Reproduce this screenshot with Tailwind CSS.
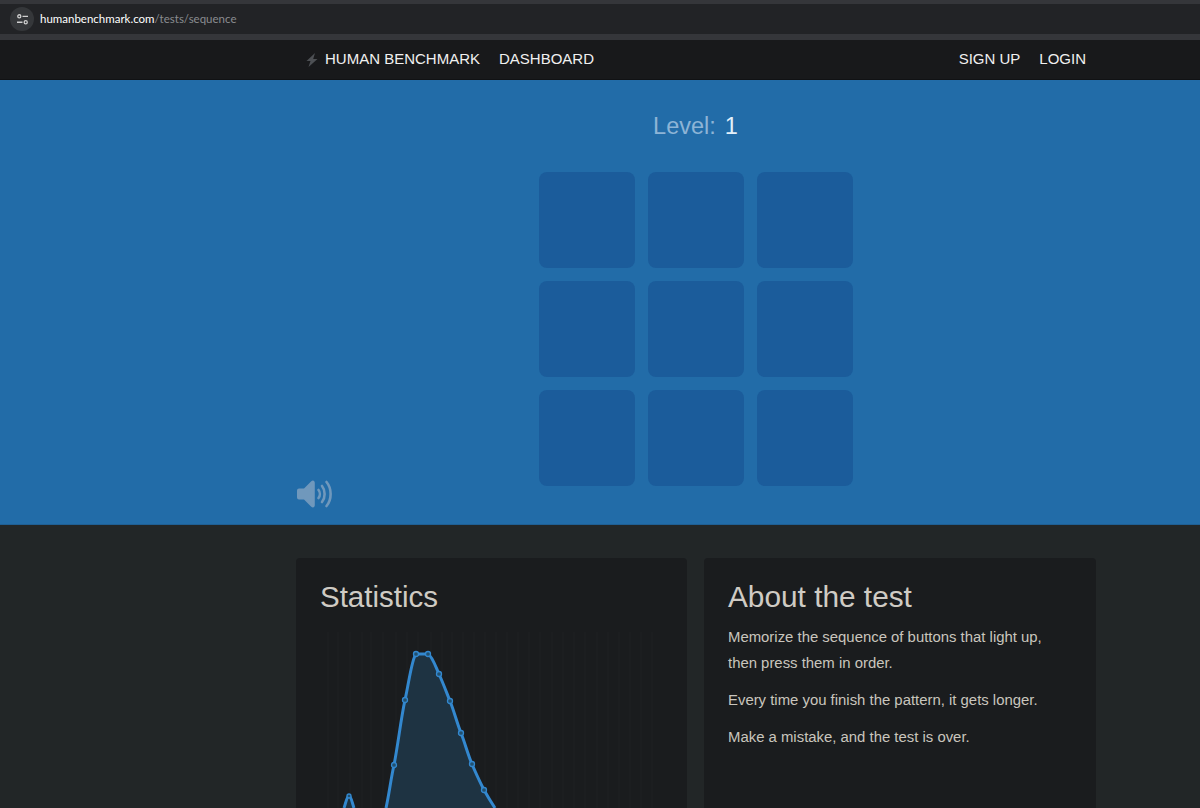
<!DOCTYPE html>
<html lang="en">
<head>
  <meta charset="UTF-8" />
  <title>Sequence Memory Test - Human Benchmark</title>
  <script src="https://cdn.jsdelivr.net/npm/@tailwindcss/browser@4"></script>
</head>
<body class="w-[1200px] h-[808px] overflow-hidden bg-[#222627] font-['Liberation_Sans',Arial,sans-serif]">
<!-- Browser bar -->
<div class="h-10 bg-[#35363a] pt-[4px] pb-[5px]">
  <div class="h-[30px] bg-[#222326] flex items-center pl-[10px]">
    <div class="w-[24px] h-[24px] rounded-full bg-[#35373a] flex items-center justify-center">
      <svg width="13" height="11" viewBox="0 0 14 12" fill="none" stroke="#d0d0d0" stroke-width="1.4">
        <circle cx="3.5" cy="2.5" r="1.7"/><path d="M7 2.5h6M1 9h6"/><circle cx="10.5" cy="9" r="1.7"/>
      </svg>
    </div>
    <span class="ml-[6px] text-[11.5px] font-['Lato',sans-serif] text-white">humanbenchmark.com<span class="text-[#8a8c90]">/tests/sequence</span></span>
  </div>
</div>

<!-- Nav -->
<nav class="h-10 bg-[#18191b] border-b border-[#111214] flex items-center pl-[306px] pr-[114px] text-[15px] text-[#f0f0f0]">
  <svg width="12" height="14" viewBox="0 0 12 14" fill="#4d5054" class="mr-[7px]"><path d="M9 0 .5 8h4L2.500 14 11.500 6H7.200z"/></svg>
  <a href="#" class="mr-[19px]">HUMAN BENCHMARK</a>
  <a href="#">DASHBOARD</a>
  <div class="ml-auto flex gap-[19px]">
    <a href="#">SIGN UP</a>
    <a href="#">LOGIN</a>
  </div>
</nav>

<!-- Test area -->
<section class="relative h-[445px] bg-[#226ca8] border-b border-[#1f5f94]">
  <div class="flex justify-center pl-[191px] pt-[31px] h-[92px] text-[23.5px] leading-[30px]">
    <span class="text-[#8db4d6] mr-[9px]">Level:</span><span class="text-[#e4f0fa]">1</span>
  </div>
  <div class="grid grid-cols-[96px_96px_96px] grid-rows-[96px_96px_96px] gap-[13px] ml-[539px] w-max">
    <div class="rounded-[8px] bg-[#1b5c9b]"></div>
    <div class="rounded-[8px] bg-[#1b5c9b]"></div>
    <div class="rounded-[8px] bg-[#1b5c9b]"></div>
    <div class="rounded-[8px] bg-[#1b5c9b]"></div>
    <div class="rounded-[8px] bg-[#1b5c9b]"></div>
    <div class="rounded-[8px] bg-[#1b5c9b]"></div>
    <div class="rounded-[8px] bg-[#1b5c9b]"></div>
    <div class="rounded-[8px] bg-[#1b5c9b]"></div>
    <div class="rounded-[8px] bg-[#1b5c9b]"></div>
  </div>
  <!-- sound toggle -->
  <svg class="absolute left-[297px] top-[399px]" width="37" height="30" viewBox="0 0 37 30" fill="none">
    <path d="M0 11.500a2 2 0 0 1 2-2h5L14 2.500c1.800-1.800 3.800-1 3.800 1.500v22c0 2.500-2 3.300-3.800 1.500L7 20.500H2a2 2 0 0 1-2-2z" fill="#7098bc"/>
    <g stroke="#7098bc" stroke-width="2.600" stroke-linecap="round">
      <path d="M21.500 11c1.800 2.300 1.800 5.700 0 8"/>
      <path d="M25 7c3.500 4.300 3.500 11.700 0 16"/>
      <path d="M29.500 3c5.500 6.500 5.500 17.500 0 24"/>
    </g>
  </svg>
</section>

<!-- Lower cards -->
<div class="flex gap-[17px] pl-[296px] pt-[33px]">
  <div class="w-[391px] h-[250px] bg-[#1a1c1e] rounded-t-[4px] pt-[20px] px-[24px]">
    <h2 class="text-[29.500px] leading-[38px] text-[#cfcbc4]">Statistics</h2>
    <svg class="mt-[16px]" width="343" height="176" viewBox="320 632 343 176" fill="none">
      <g stroke="#1e2022" stroke-width="1">
        <path d="M328 632v176M338 632v176M350 632v176M362 632v176M371 632v176M383 632v176M396 632v176M407 632v176M418 632v176M431 632v176M442 632v176M452 632v176M463 632v176M474 632v176M485 632v176M496 632v176M507 632v176M518 632v176M529 632v176M540 632v176M552 632v176M563 632v176M574 632v176M585 632v176M597 632v176M608 632v176M619 632v176M630 632v176M641 632v176M652 632v176"/>
      </g>
      <path d="M386 808C389 795 391 778 394 765C398 745 401 718 405 700C409 682 412 658 416 654L428 654C432 656 435 665 439 674C443 683 446 691 450 701C454 711 457 723 461 733C465 743 468 755 472 764C476 774 480 782 484 790C488 797 491 802 495 808Z" fill="#1e3342"/>
      <path d="M386 808C389 795 391 778 394 765C398 745 401 718 405 700C409 682 412 658 416 654L428 654C432 656 435 665 439 674C443 683 446 691 450 701C454 711 457 723 461 733C465 743 468 755 472 764C476 774 480 782 484 790C488 797 491 802 495 808" stroke="#3388cf" stroke-width="3"/>
      <path d="M344 808C346 802 347 796 349 796C351 796 352 802 354 808Z" fill="#1e3342"/>
      <path d="M344 808C346 802 347 796 349 796C351 796 352 802 354 808" stroke="#3388cf" stroke-width="3"/>
      <g fill="#22506f" stroke="#3388cf" stroke-width="1.300">
        <circle cx="349" cy="796" r="2"/><circle cx="394" cy="765" r="2.500"/><circle cx="405" cy="700" r="2.500"/><circle cx="416" cy="654" r="2.500"/><circle cx="428" cy="654" r="2.500"/><circle cx="439" cy="674" r="2.500"/><circle cx="450" cy="701" r="2.500"/><circle cx="461" cy="733" r="2.500"/><circle cx="472" cy="764" r="2.500"/><circle cx="484" cy="790" r="2.500"/>
      </g>
    </svg>
  </div>
  <div class="w-[392px] h-[250px] bg-[#1a1c1e] rounded-t-[4px] pt-[20px] px-[24px]">
    <h2 class="text-[29.800px] leading-[38px] text-[#cfcbc4]">About the test</h2>
    <div class="text-[14.900px] leading-[26px] text-[#c9c5bd]">
      <p class="mt-[8px] mb-[11px]">Memorize the sequence of buttons that light up,<br>then press them in order.</p>
      <p class="mb-[11px]">Every time you finish the pattern, it gets longer.</p>
      <p>Make a mistake, and the test is over.</p>
    </div>
  </div>
</div>
</body>
</html>
